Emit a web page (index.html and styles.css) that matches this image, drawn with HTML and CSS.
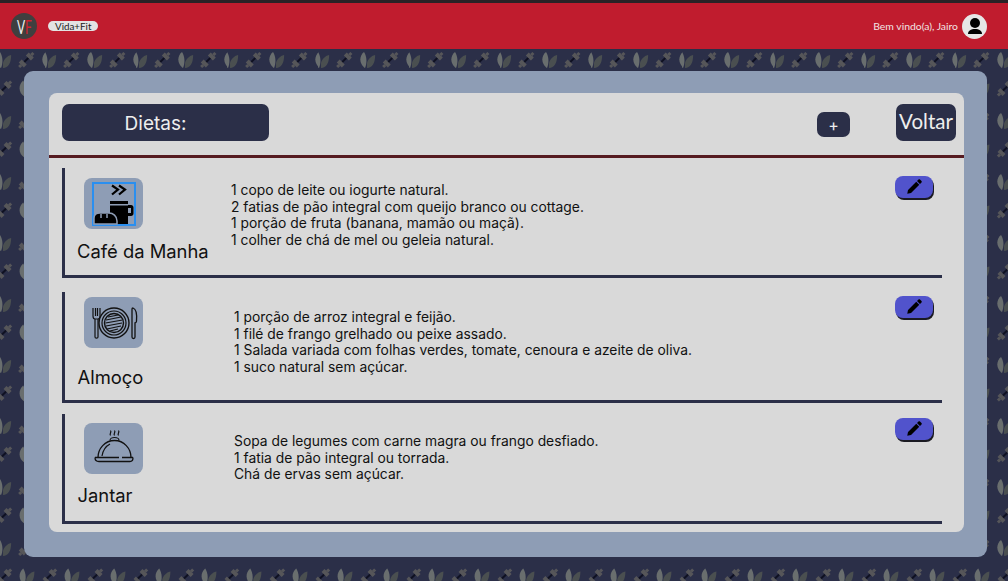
FILE: index.html
```html
<!DOCTYPE html>
<html lang="en">
<head>
    <meta charset="UTF-8">
    <title>Vida+Fit - Dietas</title>
    <link rel="stylesheet" href="styles.css">
</head>
<body>
    <header class="topbar">
        <div class="brand">
            <div class="logo"><span class="logo-mark"><span class="logo-v">V</span><span class="logo-f">F</span></span></div>
            <span class="brand-name">Vida+Fit</span>
        </div>
        <div class="user">
            <span class="welcome">Bem vindo(a), Jairo</span>
            <div class="avatar">
                <svg viewBox="0 0 24 24" width="24" height="24">
                    <circle cx="12" cy="9" r="5" fill="#000"/>
                    <path d="M5 20c0-3.500 3-5 7-5s7 1.500 7 5z" fill="#000"/>
                </svg>
            </div>
        </div>
    </header>

    <main class="frame">
        <section class="panel">
            <div class="panel-head">
                <div class="title-box">Dietas:</div>
                <button class="add-btn">+</button>
                <button class="back-btn">Voltar</button>
            </div>

            <!-- Cafe da manha -->
            <article class="meal meal-first">
                <div class="meal-side">
                    <div class="icon-box">
                        <svg viewBox="0 0 44 44" width="44" height="44">
                            <rect x="1" y="1" width="42" height="42" fill="none" stroke="#2a8ff0" stroke-width="2"/>
                            <path d="M20 3.500l6 4-6 5M27 3.500l6 4-6 5" fill="none" stroke="#000" stroke-width="2.200"/>
                            <path d="M18 19h18v4h3c1.500 0 2.500 1 2.500 2.500v6c0 1.500-1 2.500-2.500 2.500h-3v8H18z" fill="#000"/>
                            <rect x="36" y="26" width="3" height="5" fill="#8e9db5"/>
                            <rect x="18" y="22" width="18" height="1.500" fill="#8e9db5"/>
                            <path d="M2 42v-6c0-3 2-5 6-5h9c4 0 8 3 8 8v3z" fill="#000" stroke="#8e9db5" stroke-width="1.500"/>
                            <path d="M9 32v4M15 32v4" stroke="#8e9db5" stroke-width="1.500"/>
                        </svg>
                    </div>
                    <h2 class="meal-name">Café da Manha</h2>
                </div>
                <p class="meal-text">1 copo de leite ou iogurte natural.<br>2 fatias de pão integral com queijo branco ou cottage.<br>1 porção de fruta (banana, mamão ou maçã).<br>1 colher de chá de mel ou geleia natural.</p>
                <button class="edit-btn">
                    <svg viewBox="0 0 24 24" width="18" height="18"><path d="M3 21l1-5L15 5l4 4L8 20zM16 4l2-2c.6-.6 1.400-.6 2 0l2 2c.6.6.6 1.400 0 2l-2 2z" fill="#000"/></svg>
                </button>
            </article>

            <!-- Almoco -->
            <article class="meal meal-second">
                <div class="meal-side">
                    <div class="icon-box">
                        <svg viewBox="0 0 50 40" width="50" height="40" fill="none" stroke="#111" stroke-width="1.200">
                            <path d="M4 5v8c0 2 1 3 2 3h3c1 0 2-1 2-3V5M6.500 5v8M8.500 5v8"/>
                            <path d="M6 16v18c0 1.500 3 1.500 3 0V16"/>
                            <circle cx="25" cy="20" r="15" stroke-width="1.400"/>
                            <circle cx="25" cy="20" r="12"/>
                            <circle cx="25" cy="20" r="9.500" stroke-width="1.400"/>
                            <path d="M19 14l10-2M17 17l15-3M16.500 20l17-3M17 23l16-3M18 26l14-3M21 28l8-2" stroke-width="1.200"/>
                            <path d="M44 5c3 1 4 7 3.500 13 0 1-1 2-1.500 2v14c0 2-3 2-3 0V6c0-1 .5-1 1-1z" stroke-width="1.300"/>
                        </svg>
                    </div>
                    <h2 class="meal-name">Almoço</h2>
                </div>
                <p class="meal-text">1 porção de arroz integral e feijão.<br>1 filé de frango grelhado ou peixe assado.<br>1 Salada variada com folhas verdes, tomate, cenoura e azeite de oliva.<br>1 suco natural sem açúcar.</p>
                <button class="edit-btn">
                    <svg viewBox="0 0 24 24" width="18" height="18"><path d="M3 21l1-5L15 5l4 4L8 20zM16 4l2-2c.6-.6 1.400-.6 2 0l2 2c.6.6.6 1.400 0 2l-2 2z" fill="#000"/></svg>
                </button>
            </article>

            <!-- Jantar -->
            <article class="meal meal-third">
                <div class="meal-side">
                    <div class="icon-box">
                        <svg viewBox="0 0 44 40" width="44" height="40" fill="none" stroke="#111" stroke-width="1.200">
                            <path d="M18.500 6.500c-1.500-2 1.500-3 0-5M22.500 6.500c-1.500-2 1.500-3 0-5M26.500 6.500c-1.500-2 1.500-3 0-5"/>
                            <path d="M18 11.500c0-4 9-4 9 0"/>
                            <path d="M6 28.500c0-9 7-17 16.500-17S39 19.500 39 28.500" stroke-width="1.300"/>
                            <path d="M10 27c1-6 4-10 8-12"/>
                            <path d="M3 28.500h24M30 28.500h11" stroke-width="1.300"/>
                            <path d="M3 28.500c0 3 2 4 4 4h31c2 0 3-1 3-4" stroke-width="1.300"/>
                        </svg>
                    </div>
                    <h2 class="meal-name">Jantar</h2>
                </div>
                <p class="meal-text">Sopa de legumes com carne magra ou frango desfiado.<br>1 fatia de pão integral ou torrada.<br>Chá de ervas sem açúcar.</p>
                <button class="edit-btn">
                    <svg viewBox="0 0 24 24" width="18" height="18"><path d="M3 21l1-5L15 5l4 4L8 20zM16 4l2-2c.6-.6 1.400-.6 2 0l2 2c.6.6.6 1.400 0 2l-2 2z" fill="#000"/></svg>
                </button>
            </article>
        </section>
    </main>
</body>
</html>
```

FILE: styles.css
```css
* {
    box-sizing: border-box;
}
html,
body {
    height: 100%;
}
body {
    margin: 0;
    overflow: hidden;
    font-family: Inter, "Liberation Sans", sans-serif;
    color: #111;
    background-color: #2b2f48;
    /* leaf and dumbbell tile */
    background-image: url("data:image/svg+xml,%3Csvg xmlns='http://www.w3.org/2000/svg' xmlns:xlink='http://www.w3.org/1999/xlink' width='45.5' height='61' viewBox='0 0 45.5 61'%3E%3Cdefs%3E%3Cg id='l'%3E%3Cpath d='M-3-8C-8-4-8 4-2 8 0 3 0-3-3-8z' fill='%23696e6e'/%3E%3Cpath d='M0 8C5 8 8 3 8-5 4-4 1-1 0 3z' fill='%234a4f50'/%3E%3C/g%3E%3Cg id='d'%3E%3Cpath d='M-5 5L5-5' stroke='%230f1122' stroke-width='2'/%3E%3Cpath d='M-6 1L-1 6M1-6L6-1' stroke='%23565659' stroke-width='4'/%3E%3Cpath d='M-7 5L-5 7M5-7L7-5' stroke='%23565659' stroke-width='3'/%3E%3C/g%3E%3C/defs%3E%3Cuse xlink:href='%23l' x='3' y='10'/%3E%3Cuse xlink:href='%23l' x='48.500' y='10'/%3E%3Cuse xlink:href='%23d' x='26' y='10'/%3E%3Cuse xlink:href='%23d' x='4' y='38.500'/%3E%3Cuse xlink:href='%23d' x='49.500' y='38.500'/%3E%3Cuse xlink:href='%23l' x='26' y='38.500'/%3E%3C/svg%3E");
    background-position: 0 50px;
}

/* top bar */
.topbar {
    height: 49px;
    padding: 0 21px 0 11px;
    display: flex;
    align-items: center;
    justify-content: space-between;
    background-color: #c01c2e;
    border-top: 3px solid #2a2226;
}
.brand {
    display: flex;
    align-items: center;
    gap: 11px;
}
.logo {
    width: 26px;
    height: 26px;
    border-radius: 50%;
    background-color: #3f3f3f;
    display: flex;
    align-items: center;
    justify-content: center;
    font-family: Lato, sans-serif;
    font-size: 20px;
    line-height: 1;
}
.logo-mark {
    transform: scaleX(.6);
    white-space: nowrap;
}
.logo-v {
    color: #f0f0f0;
}
.logo-f {
    color: #d2202f;
}
.brand-name {
    padding: 0 7px;
    height: 10px;
    line-height: 10px;
    border-radius: 5px;
    background-color: #e3e3e3;
    color: #222;
    font-family: Lato, sans-serif;
    font-size: 9.800px;
}
.user {
    display: flex;
    align-items: center;
    gap: 4px;
}
.welcome {
    color: #f1e3e3;
    font-family: Lato, sans-serif;
    font-size: 10.400px;
}
.avatar {
    width: 25px;
    height: 25px;
    border-radius: 50%;
    background-color: #e6e6e6;
    display: flex;
    align-items: center;
    justify-content: center;
}

/* frame */
.frame {
    margin: 22px 21px 0 24px;
    height: 486px;
    padding: 22px 23px 25px 25px;
    background-color: #8e9db5;
    border-radius: 9px;
}
.panel {
    height: 439px;
    background-color: #d9d9d9;
    border-radius: 8px;
    padding-top: 11px;
}
.panel-head {
    height: 54px;
    padding: 0 8px 0 13px;
    display: flex;
    align-items: flex-start;
    border-bottom: 3px solid #561b21;
}
.title-box {
    width: 207px;
    height: 37px;
    padding-right: 20px;
    background-color: #2b2f48;
    border-radius: 7px;
    color: #eee;
    font-size: 19px;
    line-height: 40px;
    text-align: center;
}
.add-btn {
    width: 33px;
    height: 25px;
    margin: 8px 0 0 auto;
    padding: 0;
    border: 0;
    border-radius: 7px;
    background-color: #2b2f48;
    color: #eee;
    font-family: Inter, sans-serif;
    font-size: 16px;
}
.back-btn {
    width: 60px;
    height: 37px;
    margin-left: 46px;
    padding: 0 0 3px;
    border: 0;
    border-radius: 7px;
    background-color: #2b2f48;
    color: #eee;
    font-family: Lato, sans-serif;
    font-size: 20.500px;
}

/* meals */
.meal {
    position: relative;
    margin: 0 22px 0 13px;
    display: flex;
    align-items: flex-start;
    border-left: 3px solid #2b2f48;
    border-bottom: 3px solid #2b2f48;
}
.meal-first {
    height: 110px;
    margin-top: 10px;
    padding-top: 10px;
}
.meal-second {
    height: 111px;
    margin-top: 14px;
    padding-top: 5px;
}
.meal-third {
    height: 110px;
    margin-top: 11px;
    padding-top: 9px;
}
.meal-side {
    width: 166px;
    flex-shrink: 0;
}
.icon-box {
    width: 59px;
    height: 51px;
    margin-left: 19px;
    background-color: #8e9db5;
    border-radius: 8px;
    display: flex;
    align-items: center;
    justify-content: center;
}
.meal-name {
    margin: 11px 0 0 12px;
    font-size: 18.400px;
    font-weight: 400;
    line-height: 22px;
    white-space: nowrap;
}
.meal-second .meal-name {
    margin-top: 18px;
    margin-left: 12.500px;
}
.meal-third .meal-name {
    margin-top: 10px;
    margin-left: 12.500px;
}
.meal-text {
    margin: 4px 0 0;
    font-size: 13.850px;
    line-height: 16.700px;
}
.meal-second .meal-text {
    margin: 12px 0 0 3px;
}
.meal-third .meal-text {
    margin: 10px 0 0 3px;
}
.edit-btn {
    position: absolute;
    top: 8px;
    right: 9px;
    width: 38px;
    height: 22px;
    padding: 0;
    border: 0;
    border-radius: 8px;
    background-color: #5153cc;
    box-shadow: 1px 2px 0 #1a1a22;
    display: flex;
    align-items: center;
    justify-content: center;
}
.meal-second .edit-btn {
    top: 4px;
}
.meal-third .edit-btn {
    top: 4px;
}
```
